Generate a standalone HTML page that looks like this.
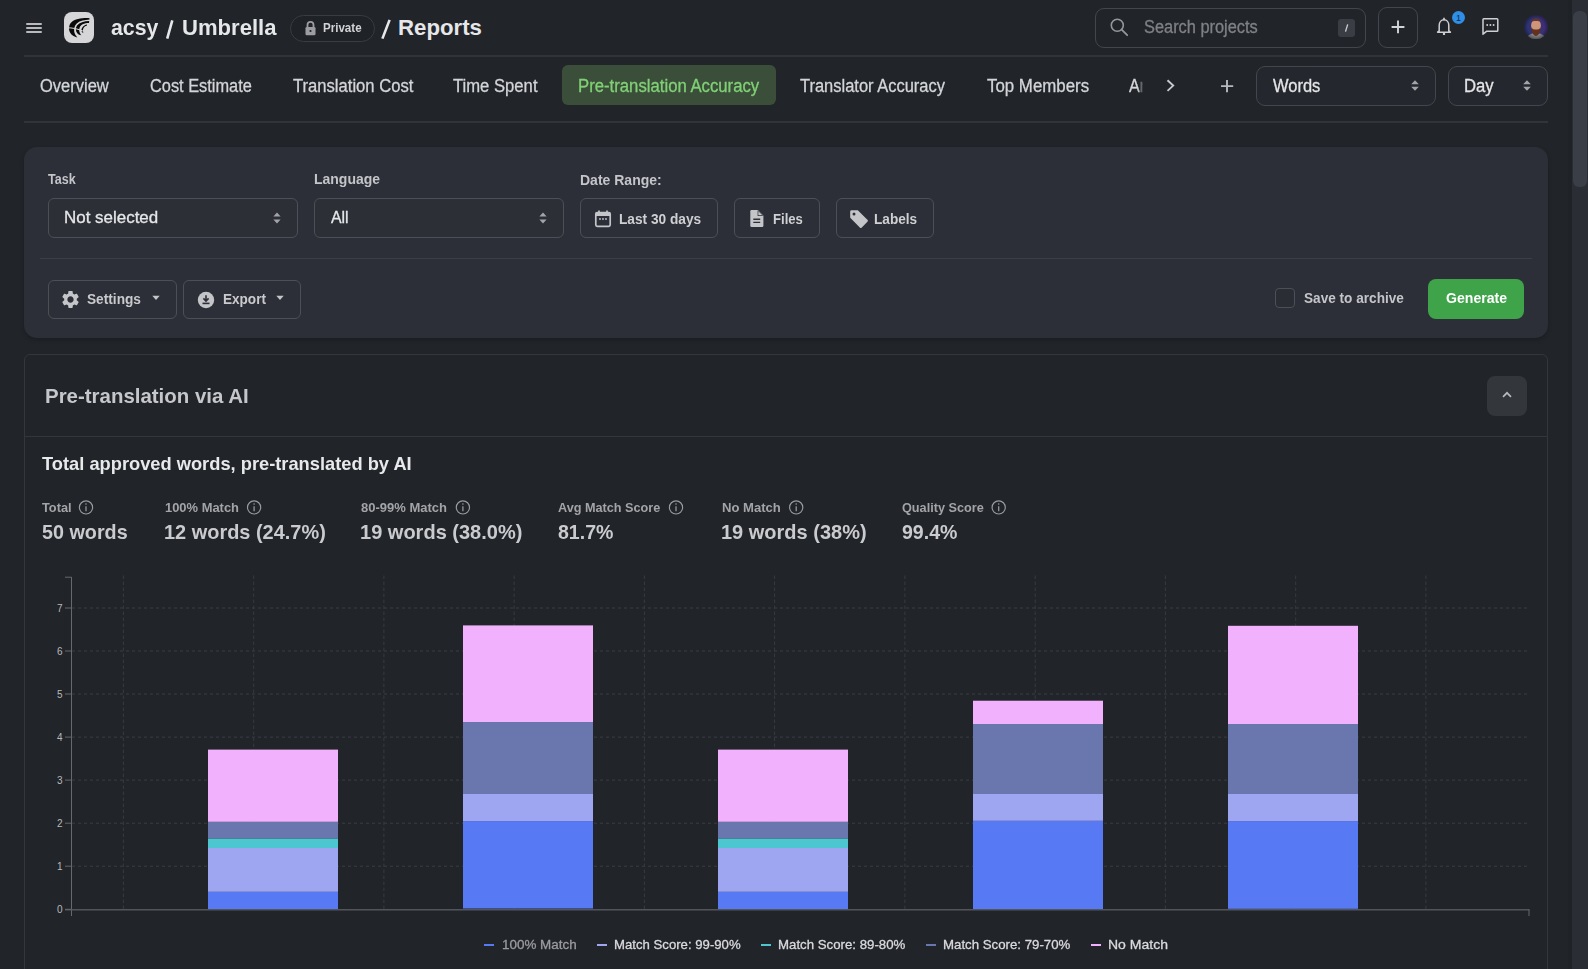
<!DOCTYPE html>
<html><head><meta charset="utf-8">
<style>
html,body{margin:0;padding:0;}
body{width:1588px;height:969px;overflow:hidden;background:#212429;position:relative;font-family:"Liberation Sans", sans-serif;}
.t{position:absolute;white-space:nowrap;line-height:1;}
.a{position:absolute;box-sizing:border-box;}
</style></head><body>
<!-- hamburger -->
<div class="a" style="left:26px;top:22.5px;width:16px;height:2px;background:#b9babe;border-radius:1px"></div>
<div class="a" style="left:26px;top:26.5px;width:16px;height:2px;background:#b9babe;border-radius:1px"></div>
<div class="a" style="left:26px;top:30.5px;width:16px;height:2px;background:#b9babe;border-radius:1px"></div>
<!-- logo -->
<div class="a" style="left:64px;top:12px;width:30px;height:30.5px;background:#d6d6d8;border-radius:8px"></div>
<svg class="a" style="left:64px;top:12px" width="30" height="31" viewBox="0 0 30 31">
  <path d="M25.5,6.2 C19,5.8 11,6.8 7.2,10.5 C4.6,13.2 4.5,17.8 6.2,20.8 C7.6,23.4 10.2,24.9 13.3,25.4 C11.8,23.8 10.6,21.8 10.2,19.5 C9.8,16.5 10.6,13.5 13,11.3 C16,8.8 20.5,8 25.5,7.6 Z" fill="#0a0a0a"/>
  <path d="M25.2,9 C20,9.2 15.5,10.5 13,13.5 C11.3,15.8 11.5,19.5 13.5,21.5 C14.5,22.5 15.8,23 17.2,23.2 C16,21.8 15.2,20 15.2,18 C15.2,15.5 16.5,13.5 18.6,12.3 C20.5,11.3 22.8,11 25,10.9 Z" fill="#0a0a0a"/>
  <path d="M23,12.6 C20.5,13 18.5,14.8 17.6,17 C17.3,18 17.4,19.5 18.5,20.8 L19.5,20.2 C18.8,19 18.8,17.8 19.3,16.6 C20,15 21.2,14 23,13.6 Z" fill="#0a0a0a"/>
  <path d="M3.5,15.8 C8,15.8 13,16.5 20,19.4" fill="none" stroke="#d6d6d8" stroke-width="1"/>
</svg>
<!-- private pill -->
<div class="a" style="left:290px;top:15px;width:85px;height:26.5px;border:1px solid #393c43;border-radius:14px;background:#1f2227"></div>
<svg class="a" style="left:304px;top:20px" width="13" height="16" viewBox="0 0 13 16">
  <path d="M3.5,7 V4.8 A3,3 0 0 1 9.5,4.8 V7" fill="none" stroke="#9c9da2" stroke-width="1.8"/>
  <rect x="1.5" y="7" width="10" height="8.3" rx="1.3" fill="#9c9da2"/>
  <circle cx="6.5" cy="11" r="1.1" fill="#1f2227"/>
</svg>
<!-- search -->
<div class="a" style="left:1095px;top:7.5px;width:271px;height:40px;border:1px solid #43464c;border-radius:9px"></div>
<svg class="a" style="left:1109px;top:17px" width="20" height="20" viewBox="0 0 20 20">
  <circle cx="8.3" cy="8.3" r="6" fill="none" stroke="#95979c" stroke-width="1.6"/>
  <path d="M12.7,12.7 L18.2,18.2" stroke="#95979c" stroke-width="1.8" stroke-linecap="round"/>
</svg>
<div class="a" style="left:1338px;top:18.7px;width:16.5px;height:18px;background:#3a3d43;border-radius:3px"></div>
<svg class="a" style="left:1338px;top:18.7px" width="17" height="18" viewBox="0 0 17 18">
  <path d="M9.6,5.8 L7.6,12.2" stroke="#c9cace" stroke-width="1.3" stroke-linecap="round"/>
</svg>
<!-- plus button -->
<div class="a" style="left:1378px;top:7px;width:40px;height:40.5px;border:1px solid #43464c;border-radius:9px"></div>
<svg class="a" style="left:1390px;top:19px" width="16" height="16" viewBox="0 0 16 16">
  <path d="M8,1.5 V14.3 M1.6,8 H14.4" stroke="#d3d4d7" stroke-width="1.9"/>
</svg>
<!-- bell -->
<svg class="a" style="left:1434px;top:15px" width="20" height="22" viewBox="0 0 20 22">
  <path d="M5.2,15.9 V10.3 C5.2,7.2 7.2,4.8 10,4.8 C12.8,4.8 14.8,7.2 14.8,10.3 V15.9 L16.4,17.2 H3.6 Z" fill="none" stroke="#cfd0d3" stroke-width="1.5" stroke-linejoin="round"/>
  <path d="M10,3.2 V4.8" stroke="#cfd0d3" stroke-width="1.5" stroke-linecap="round"/>
  <circle cx="10" cy="18.9" r="1.2" fill="#cfd0d3"/>
</svg>
<div class="a" style="left:1451.8px;top:11.1px;width:13.4px;height:13.4px;border-radius:50%;background:#2f8ee6"></div>
<div class="t" style="left:1451.8px;top:13.6px;width:13.4px;text-align:center;font-size:9px;color:#0e2a4a;line-height:1">1</div>
<!-- chat -->
<svg class="a" style="left:1479px;top:15px" width="22" height="22" viewBox="0 0 22 22">
  <path d="M4,4.6 Q4,3.8 4.8,3.8 H18 Q18.8,3.8 18.8,4.6 V15.4 Q18.8,16.2 18,16.2 H7.8 L4,19.2 Z" fill="none" stroke="#cfd0d3" stroke-width="1.5" stroke-linejoin="round"/>
  <circle cx="8.2" cy="10" r="0.95" fill="#cfd0d3"/><circle cx="11.4" cy="10" r="0.95" fill="#cfd0d3"/><circle cx="14.6" cy="10" r="0.95" fill="#cfd0d3"/>
</svg>
<!-- avatar -->
<svg class="a" style="left:1524px;top:15px" width="24" height="24" viewBox="0 0 24 24">
  <defs><clipPath id="av"><circle cx="12" cy="12" r="12"/></clipPath>
  <linearGradient id="avg" x1="0" y1="0" x2="1" y2="0"><stop offset="0" stop-color="#2b3470"/><stop offset="1" stop-color="#3f2f78"/></linearGradient>
  <radialGradient id="avv" cx="0.5" cy="0.5" r="0.5"><stop offset="0.7" stop-color="#000" stop-opacity="0"/><stop offset="1" stop-color="#000" stop-opacity="0.35"/></radialGradient></defs>
  <g clip-path="url(#av)">
    <rect width="24" height="24" fill="url(#avg)"/>
    <ellipse cx="12" cy="24.5" rx="10" ry="6.5" fill="#828184"/>
    <ellipse cx="12" cy="10.6" rx="4.9" ry="6.4" fill="#cf957c"/>
    <path d="M7.3,12.2 C7.6,17.5 9.6,20.8 12,21 C14.4,20.8 16.4,17.5 16.7,12.2 C15.4,14.2 14,14.6 12,14.6 C10,14.6 8.6,14.2 7.3,12.2 Z" fill="#62321f"/>
    <path d="M7.4,7 C8.2,4.3 10,3.6 12,3.6 C14,3.6 15.8,4.3 16.6,7 C15,5.8 9,5.8 7.4,7Z" fill="#6b3526"/>
    <rect width="24" height="24" fill="url(#avv)"/>
  </g>
</svg>
<!-- header divider -->
<div class="a" style="left:24px;top:55px;width:1524px;height:2px;background:#31343b"></div>
<!-- active tab -->
<div class="a" style="left:562px;top:65.4px;width:214px;height:39.6px;background:#3b4e3a;border-radius:6px"></div>
<!-- truncated tab -->
<div class="t" style="left:1129.2px;top:76.6px;font-size:18px;color:#d4d5d8;width:16px;overflow:hidden;-webkit-text-stroke:0.3px #d4d5d8;transform:scaleX(0.9);transform-origin:0 0;-webkit-mask-image:linear-gradient(90deg,#000 62%,rgba(0,0,0,0.05) 100%)">Ar</div>
<svg class="a" style="left:1163px;top:77px" width="14" height="17" viewBox="0 0 14 17">
  <path d="M4.5,3.3 L10.2,8.6 L4.5,13.9" fill="none" stroke="#c9cace" stroke-width="1.9"/>
</svg>
<svg class="a" style="left:1219px;top:77.5px" width="16" height="16" viewBox="0 0 16 16">
  <path d="M8,2 V14.2 M2,8.1 H14.2" stroke="#b8b9bd" stroke-width="1.9"/>
</svg>
<!-- words / day selects -->
<div class="a" style="left:1256px;top:65.5px;width:179.5px;height:40px;border:1px solid #43464c;border-radius:9px;background:#24272d"></div>
<div class="a" style="left:1448px;top:65.5px;width:100px;height:40px;border:1px solid #43464c;border-radius:9px;background:#24272d"></div>
<svg class="a" style="left:1410px;top:79px" width="10" height="13" viewBox="0 0 10 13">
  <path d="M5,1.2 L8.8,5.2 H1.2 Z M5,11.8 L8.8,7.8 H1.2 Z" fill="#a3a4a9"/>
</svg>
<svg class="a" style="left:1522px;top:79px" width="10" height="13" viewBox="0 0 10 13">
  <path d="M5,1.2 L8.8,5.2 H1.2 Z M5,11.8 L8.8,7.8 H1.2 Z" fill="#a3a4a9"/>
</svg>
<!-- tabs divider -->
<div class="a" style="left:24px;top:121px;width:1524px;height:2px;background:#31343b"></div>

<!-- filter panel -->
<div class="a" style="left:24px;top:147.3px;width:1524px;height:190.7px;background:#2c2f37;border-radius:13px;box-shadow:0 2px 4px rgba(0,0,0,0.22)"></div>
<div class="a" style="left:48px;top:197.5px;width:250px;height:40px;border:1px solid #4c4f56;border-radius:6px;background:#2c2f36"></div>
<div class="a" style="left:314px;top:197.5px;width:250px;height:40px;border:1px solid #4c4f56;border-radius:6px;background:#2c2f36"></div>
<svg class="a" style="left:272px;top:210.5px" width="10" height="14" viewBox="0 0 10 14">
  <path d="M5,1.4 L8.6,5.6 H1.4 Z M5,12.6 L8.6,8.4 H1.4 Z" fill="#a3a4a9"/>
</svg>
<svg class="a" style="left:538px;top:210.5px" width="10" height="14" viewBox="0 0 10 14">
  <path d="M5,1.4 L8.6,5.6 H1.4 Z M5,12.6 L8.6,8.4 H1.4 Z" fill="#a3a4a9"/>
</svg>
<div class="a" style="left:580px;top:198px;width:138px;height:39.5px;border:1px solid #4c4f56;border-radius:6px"></div>
<div class="a" style="left:734px;top:198px;width:86px;height:39.5px;border:1px solid #4c4f56;border-radius:6px"></div>
<div class="a" style="left:836px;top:198px;width:98px;height:39.5px;border:1px solid #4c4f56;border-radius:6px"></div>
<!-- calendar icon -->
<svg class="a" style="left:594px;top:209px" width="18" height="19" viewBox="0 0 18 19">
  <rect x="1.8" y="3.5" width="14.4" height="13.8" rx="1.5" fill="none" stroke="#c4c5c9" stroke-width="1.7"/>
  <rect x="1.8" y="3.5" width="14.4" height="3.5" fill="#c4c5c9"/>
  <path d="M5,1.5 V4 M13,1.5 V4" stroke="#c4c5c9" stroke-width="1.7"/>
  <circle cx="6" cy="10" r="0.9" fill="#c4c5c9"/><circle cx="9" cy="10" r="0.9" fill="#c4c5c9"/><circle cx="12" cy="10" r="0.9" fill="#c4c5c9"/>
</svg>
<!-- file icon -->
<svg class="a" style="left:749px;top:209px" width="16" height="19" viewBox="0 0 16 19">
  <path d="M1.3,2.3 A1.2,1.2 0 0 1 2.5,1.1 H8.8 L14.4,6.7 V16.7 A1.2,1.2 0 0 1 13.2,17.9 H2.5 A1.2,1.2 0 0 1 1.3,16.7 Z" fill="#c4c5c9"/>
  <path d="M8.6,1.3 V6.9 H14.2 Z" fill="#2c2f37"/>
  <path d="M9.3,2.3 L13.3,6.3 H9.3 Z" fill="#c4c5c9"/>
  <path d="M4.3,10.2 H11.2 M4.3,13.4 H11.2" stroke="#2c2f37" stroke-width="1.4"/>
</svg>
<!-- tag icon -->
<svg class="a" style="left:849px;top:209px" width="20" height="19" viewBox="0 0 20 19">
  <path d="M1.2,2.6 A1.4,1.4 0 0 1 2.6,1.2 H8.8 L18.4,10.8 A1.4,1.4 0 0 1 18.4,12.8 L12.8,18.4 A1.4,1.4 0 0 1 10.8,18.4 L1.2,8.8 Z" fill="#c4c5c9"/>
  <circle cx="5" cy="5" r="1.5" fill="#2c2f37"/>
</svg>
<!-- panel divider -->
<div class="a" style="left:40px;top:257.5px;width:1492px;height:1.2px;background:#3b3e45"></div>
<!-- settings/export -->
<div class="a" style="left:48px;top:280px;width:129px;height:38.5px;border:1px solid #4c4f56;border-radius:6px"></div>
<div class="a" style="left:183px;top:280px;width:118px;height:38.5px;border:1px solid #4c4f56;border-radius:6px"></div>
<svg class="a" style="left:60.3px;top:289px" width="21" height="21" viewBox="0 0 24 24">
  <path fill="#c4c5c9" d="M19.14,12.94c0.04-0.3,0.06-0.61,0.06-0.94c0-0.32-0.02-0.64-0.07-0.94l2.03-1.58c0.18-0.14,0.23-0.41,0.12-0.61 l-1.92-3.32c-0.12-0.22-0.37-0.29-0.59-0.22l-2.39,0.96c-0.5-0.38-1.03-0.7-1.62-0.94L14.4,2.81c-0.04-0.24-0.24-0.41-0.48-0.41 h-3.84c-0.24,0-0.43,0.17-0.47,0.41L9.25,5.35C8.66,5.59,8.12,5.92,7.63,6.29L5.24,5.33c-0.22-0.08-0.47,0-0.59,0.22L2.74,8.87 C2.62,9.08,2.66,9.34,2.86,9.48l2.03,1.58C4.84,11.36,4.8,11.69,4.8,12s0.02,0.64,0.07,0.94l-2.03,1.58 c-0.18,0.14-0.23,0.41-0.12,0.61l1.92,3.32c0.12,0.22,0.37,0.29,0.59,0.22l2.39-0.96c0.5,0.38,1.03,0.7,1.62,0.94l0.36,2.54 c0.05,0.24,0.24,0.41,0.48,0.41h3.84c0.24,0,0.44-0.17,0.47-0.41l0.36-2.54c0.59-0.24,1.13-0.56,1.62-0.94l2.39,0.96 c0.22,0.08,0.47,0,0.59-0.22l1.92-3.32c0.12-0.22,0.07-0.47-0.12-0.61L19.14,12.94z M12,15.6c-1.98,0-3.6-1.62-3.6-3.6 s1.62-3.6,3.6-3.6s3.6,1.62,3.6,3.6S13.98,15.6,12,15.6z"/>
</svg>
<svg class="a" style="left:151px;top:294px" width="10" height="8" viewBox="0 0 10 8">
  <path d="M1.3,1.8 H8.7 L5,6 Z" fill="#c4c5c9"/>
</svg>
<svg class="a" style="left:196.5px;top:290.5px" width="18" height="18" viewBox="0 0 18 18">
  <circle cx="9" cy="9" r="8.2" fill="#c4c5c9"/>
  <path d="M9,4.2 V9.6 M6.4,7.4 L9,10 L11.6,7.4" fill="none" stroke="#2c2f37" stroke-width="1.6"/>
  <path d="M5.5,12.4 H12.5" stroke="#2c2f37" stroke-width="1.6"/>
</svg>
<svg class="a" style="left:275px;top:294px" width="10" height="8" viewBox="0 0 10 8">
  <path d="M1.3,1.8 H8.7 L5,6 Z" fill="#c4c5c9"/>
</svg>
<!-- checkbox -->
<div class="a" style="left:1275px;top:288.3px;width:20px;height:20px;border:1px solid #4c4f56;border-radius:4px;background:#2a2d34"></div>
<!-- generate -->
<div class="a" style="left:1428px;top:278.5px;width:96.2px;height:40.2px;background:#3fa34a;border-radius:8px"></div>

<!-- card -->
<div class="a" style="left:24px;top:354px;width:1523.5px;height:700px;border:1px solid #33363c;border-radius:6px"></div>
<div class="a" style="left:25px;top:435.5px;width:1521.5px;height:1px;background:#33363c"></div>
<div class="a" style="left:1487px;top:375.5px;width:40px;height:40px;background:#33363b;border-radius:8px"></div>
<svg class="a" style="left:1500px;top:388px" width="14" height="14" viewBox="0 0 14 14">
  <path d="M3,8.8 L7,4.8 L11,8.8" fill="none" stroke="#b8b9bd" stroke-width="1.7"/>
</svg>
<!-- info icons -->
<svg class="a" style="left:0;top:0" width="1100" height="560">
<g fill="none" stroke="#9a9ca1" stroke-width="1.15"><circle cx="86.0" cy="507.4" r="6.6"/><circle cx="254.1" cy="507.4" r="6.6"/><circle cx="462.9" cy="507.4" r="6.6"/><circle cx="676.0" cy="507.4" r="6.6"/><circle cx="796.2" cy="507.4" r="6.6"/><circle cx="998.7" cy="507.4" r="6.6"/></g>
<g stroke="#9a9ca1" stroke-width="1.25"><path d="M86.0,506.2 V511.3"/><path d="M254.1,506.2 V511.3"/><path d="M462.9,506.2 V511.3"/><path d="M676.0,506.2 V511.3"/><path d="M796.2,506.2 V511.3"/><path d="M998.7,506.2 V511.3"/></g>
<g fill="#9a9ca1"><circle cx="86.0" cy="504.0" r="0.8"/><circle cx="254.1" cy="504.0" r="0.8"/><circle cx="462.9" cy="504.0" r="0.8"/><circle cx="676.0" cy="504.0" r="0.8"/><circle cx="796.2" cy="504.0" r="0.8"/><circle cx="998.7" cy="504.0" r="0.8"/></g>
</svg>
<svg class="a" style="left:0;top:0" width="1588" height="969" viewBox="0 0 1588 969">
<line x1="72" y1="866.2" x2="1527" y2="866.2" stroke="#3a3d43" stroke-width="1" stroke-dasharray="3 3"/>
<line x1="72" y1="823.2" x2="1527" y2="823.2" stroke="#3a3d43" stroke-width="1" stroke-dasharray="3 3"/>
<line x1="72" y1="780.1" x2="1527" y2="780.1" stroke="#3a3d43" stroke-width="1" stroke-dasharray="3 3"/>
<line x1="72" y1="737.1" x2="1527" y2="737.1" stroke="#3a3d43" stroke-width="1" stroke-dasharray="3 3"/>
<line x1="72" y1="694.0" x2="1527" y2="694.0" stroke="#3a3d43" stroke-width="1" stroke-dasharray="3 3"/>
<line x1="72" y1="651.0" x2="1527" y2="651.0" stroke="#3a3d43" stroke-width="1" stroke-dasharray="3 3"/>
<line x1="72" y1="608.0" x2="1527" y2="608.0" stroke="#3a3d43" stroke-width="1" stroke-dasharray="3 3"/>
<line x1="123.4" y1="575.5" x2="123.4" y2="909" stroke="#383b41" stroke-width="1" stroke-dasharray="3.5 2.5"/>
<line x1="253.7" y1="575.5" x2="253.7" y2="909" stroke="#383b41" stroke-width="1" stroke-dasharray="3.5 2.5"/>
<line x1="383.9" y1="575.5" x2="383.9" y2="909" stroke="#383b41" stroke-width="1" stroke-dasharray="3.5 2.5"/>
<line x1="514.1" y1="575.5" x2="514.1" y2="909" stroke="#383b41" stroke-width="1" stroke-dasharray="3.5 2.5"/>
<line x1="644.4" y1="575.5" x2="644.4" y2="909" stroke="#383b41" stroke-width="1" stroke-dasharray="3.5 2.5"/>
<line x1="774.6" y1="575.5" x2="774.6" y2="909" stroke="#383b41" stroke-width="1" stroke-dasharray="3.5 2.5"/>
<line x1="904.9" y1="575.5" x2="904.9" y2="909" stroke="#383b41" stroke-width="1" stroke-dasharray="3.5 2.5"/>
<line x1="1035.2" y1="575.5" x2="1035.2" y2="909" stroke="#383b41" stroke-width="1" stroke-dasharray="3.5 2.5"/>
<line x1="1165.4" y1="575.5" x2="1165.4" y2="909" stroke="#383b41" stroke-width="1" stroke-dasharray="3.5 2.5"/>
<line x1="1295.7" y1="575.5" x2="1295.7" y2="909" stroke="#383b41" stroke-width="1" stroke-dasharray="3.5 2.5"/>
<line x1="1425.9" y1="575.5" x2="1425.9" y2="909" stroke="#383b41" stroke-width="1" stroke-dasharray="3.5 2.5"/>
<rect x="208" y="891.8" width="130" height="17.2" fill="#5779f3"/>
<rect x="208" y="848.0" width="130" height="43.8" fill="#9ea6f2"/>
<rect x="208" y="838.4" width="130" height="9.6" fill="#4cc7d0"/>
<rect x="208" y="821.8" width="130" height="16.6" fill="#6a76ae"/>
<rect x="208" y="749.6" width="130" height="72.2" fill="#f2b1fc"/>
<rect x="463" y="821.1" width="130" height="87.4" fill="#5779f3"/>
<rect x="463" y="794.0" width="130" height="27.1" fill="#9ea6f2"/>
<rect x="463" y="722.0" width="130" height="72.0" fill="#6a76ae"/>
<rect x="463" y="625.4" width="130" height="96.6" fill="#f2b1fc"/>
<rect x="718" y="891.8" width="130" height="17.2" fill="#5779f3"/>
<rect x="718" y="848.0" width="130" height="43.8" fill="#9ea6f2"/>
<rect x="718" y="838.4" width="130" height="9.6" fill="#4cc7d0"/>
<rect x="718" y="821.8" width="130" height="16.6" fill="#6a76ae"/>
<rect x="718" y="749.6" width="130" height="72.2" fill="#f2b1fc"/>
<rect x="973" y="820.8" width="130" height="88.2" fill="#5779f3"/>
<rect x="973" y="794.0" width="130" height="26.8" fill="#9ea6f2"/>
<rect x="973" y="724.0" width="130" height="70.0" fill="#6a76ae"/>
<rect x="973" y="700.7" width="130" height="23.3" fill="#f2b1fc"/>
<rect x="1228" y="821.1" width="130" height="87.7" fill="#5779f3"/>
<rect x="1228" y="794.0" width="130" height="27.1" fill="#9ea6f2"/>
<rect x="1228" y="724.0" width="130" height="70.0" fill="#6a76ae"/>
<rect x="1228" y="625.8" width="130" height="98.2" fill="#f2b1fc"/>
<line x1="71.5" y1="577" x2="71.5" y2="916" stroke="#66696f" stroke-width="1"/>
<line x1="65" y1="577.2" x2="71.5" y2="577.2" stroke="#66696f" stroke-width="1"/>
<line x1="65" y1="909.8" x2="1529.5" y2="909.8" stroke="#52555b" stroke-width="1.6"/>
<line x1="1529" y1="909.5" x2="1529" y2="916" stroke="#66696f" stroke-width="1"/>
<line x1="65" y1="909.3" x2="71.5" y2="909.3" stroke="#66696f" stroke-width="1"/>
<text x="62.5" y="913.3" text-anchor="end" style="font-family:'Liberation Sans',sans-serif;font-size:10px" fill="#b8b9bd">0</text>
<line x1="65" y1="866.2" x2="71.5" y2="866.2" stroke="#66696f" stroke-width="1"/>
<text x="62.5" y="870.2" text-anchor="end" style="font-family:'Liberation Sans',sans-serif;font-size:10px" fill="#b8b9bd">1</text>
<line x1="65" y1="823.2" x2="71.5" y2="823.2" stroke="#66696f" stroke-width="1"/>
<text x="62.5" y="827.2" text-anchor="end" style="font-family:'Liberation Sans',sans-serif;font-size:10px" fill="#b8b9bd">2</text>
<line x1="65" y1="780.1" x2="71.5" y2="780.1" stroke="#66696f" stroke-width="1"/>
<text x="62.5" y="784.1" text-anchor="end" style="font-family:'Liberation Sans',sans-serif;font-size:10px" fill="#b8b9bd">3</text>
<line x1="65" y1="737.1" x2="71.5" y2="737.1" stroke="#66696f" stroke-width="1"/>
<text x="62.5" y="741.1" text-anchor="end" style="font-family:'Liberation Sans',sans-serif;font-size:10px" fill="#b8b9bd">4</text>
<line x1="65" y1="694.0" x2="71.5" y2="694.0" stroke="#66696f" stroke-width="1"/>
<text x="62.5" y="698.0" text-anchor="end" style="font-family:'Liberation Sans',sans-serif;font-size:10px" fill="#b8b9bd">5</text>
<line x1="65" y1="651.0" x2="71.5" y2="651.0" stroke="#66696f" stroke-width="1"/>
<text x="62.5" y="655.0" text-anchor="end" style="font-family:'Liberation Sans',sans-serif;font-size:10px" fill="#b8b9bd">6</text>
<line x1="65" y1="608.0" x2="71.5" y2="608.0" stroke="#66696f" stroke-width="1"/>
<text x="62.5" y="612.0" text-anchor="end" style="font-family:'Liberation Sans',sans-serif;font-size:10px" fill="#b8b9bd">7</text>
<rect x="484" y="944" width="10" height="2" fill="#5779f3"/>
<rect x="597" y="944" width="10" height="2" fill="#9ea6f2"/>
<rect x="761" y="944" width="10" height="2" fill="#4cc7d0"/>
<rect x="926" y="944" width="10" height="2" fill="#6a76ae"/>
<rect x="1091" y="944" width="10" height="2" fill="#f2b1fc"/>
</svg>
<!-- scrollbar -->
<div class="a" style="left:1568px;top:0;width:4px;height:969px;background:#1f2227"></div>
<div class="a" style="left:1572px;top:0;width:16px;height:969px;background:#2a2d34"></div>
<div class="a" style="left:1573px;top:10.5px;width:14px;height:176px;background:#3a3e46;border-radius:6px"></div>
<svg class="a" style="left:160px;top:15px" width="240" height="30" viewBox="160 15 240 30">
  <path d="M167.2,38.6 L172.3,20.3 M382.4,38.6 L389.6,19.9" stroke="#e6e7e9" stroke-width="2.6" stroke-linecap="butt"/>
</svg>

<div id="h1a" class="t" style="left:110.70px;top:17.41px;font-size:22.20px;font-weight:700;color:#e6e7e9;transform:scaleX(0.9576);transform-origin:0 0;">acsy</div>
<div id="h1b" class="t" style="left:181.91px;top:17.41px;font-size:22.20px;font-weight:700;color:#e6e7e9;transform:scaleX(0.9946);transform-origin:0 0;">Umbrella</div>
<div id="priv" class="t" style="left:322.70px;top:20.97px;font-size:13.50px;font-weight:700;color:#d2d3d6;transform:scaleX(0.8568);transform-origin:0 0;">Private</div>
<div id="rep" class="t" style="left:398.10px;top:17.41px;font-size:22.20px;font-weight:700;color:#e6e7e9;">Reports</div>
<div id="srch" class="t" style="left:1143.50px;top:18.99px;font-size:17.50px;font-weight:400;color:#7f8186;transform:scaleX(0.9357);transform-origin:0 0;-webkit-text-stroke:0.30px #7f8186;">Search projects</div>
<div id="t1" class="t" style="left:40.30px;top:76.56px;font-size:18.00px;font-weight:400;color:#d4d5d8;transform:scaleX(0.9169);transform-origin:0 0;-webkit-text-stroke:0.30px #d4d5d8;">Overview</div>
<div id="t2" class="t" style="left:150.20px;top:76.56px;font-size:18.00px;font-weight:400;color:#d4d5d8;transform:scaleX(0.9087);transform-origin:0 0;-webkit-text-stroke:0.30px #d4d5d8;">Cost Estimate</div>
<div id="t3" class="t" style="left:292.80px;top:76.56px;font-size:18.00px;font-weight:400;color:#d4d5d8;transform:scaleX(0.9234);transform-origin:0 0;-webkit-text-stroke:0.30px #d4d5d8;">Translation Cost</div>
<div id="t4" class="t" style="left:453.40px;top:76.56px;font-size:18.00px;font-weight:400;color:#d4d5d8;transform:scaleX(0.9248);transform-origin:0 0;-webkit-text-stroke:0.30px #d4d5d8;">Time Spent</div>
<div id="t5" class="t" style="left:578.07px;top:76.56px;font-size:18.00px;font-weight:400;color:#80d176;transform:scaleX(0.9289);transform-origin:0 0;-webkit-text-stroke:0.30px #80d176;">Pre-translation Accuracy</div>
<div id="t6" class="t" style="left:800.40px;top:76.56px;font-size:18.00px;font-weight:400;color:#d4d5d8;transform:scaleX(0.9154);transform-origin:0 0;-webkit-text-stroke:0.30px #d4d5d8;">Translator Accuracy</div>
<div id="t7" class="t" style="left:986.80px;top:76.56px;font-size:18.00px;font-weight:400;color:#d4d5d8;transform:scaleX(0.9364);transform-origin:0 0;-webkit-text-stroke:0.30px #d4d5d8;">Top Members</div>
<div id="words" class="t" style="left:1273.00px;top:76.96px;font-size:18.00px;font-weight:400;color:#e4e5e7;transform:scaleX(0.9153);transform-origin:0 0;-webkit-text-stroke:0.30px #e4e5e7;">Words</div>
<div id="day" class="t" style="left:1464.37px;top:76.96px;font-size:18.00px;font-weight:400;color:#e4e5e7;transform:scaleX(0.9255);transform-origin:0 0;-webkit-text-stroke:0.30px #e4e5e7;">Day</div>
<div id="lTask" class="t" style="left:48.30px;top:172.13px;font-size:14.50px;font-weight:700;color:#c4c5c9;transform:scaleX(0.8630);transform-origin:0 0;">Task</div>
<div id="lLang" class="t" style="left:314.40px;top:172.33px;font-size:14.50px;font-weight:700;color:#c4c5c9;transform:scaleX(0.9647);transform-origin:0 0;">Language</div>
<div id="lDate" class="t" style="left:580.00px;top:172.83px;font-size:14.50px;font-weight:700;color:#c4c5c9;transform:scaleX(0.9657);transform-origin:0 0;">Date Range:</div>
<div id="sNot" class="t" style="left:64.27px;top:209.13px;font-size:16.50px;font-weight:400;color:#e6e7e9;transform:scaleX(1.0272);transform-origin:0 0;-webkit-text-stroke:0.30px #e6e7e9;">Not selected</div>
<div id="sAll" class="t" style="left:331.20px;top:209.13px;font-size:16.50px;font-weight:400;color:#e6e7e9;transform:scaleX(0.9620);transform-origin:0 0;-webkit-text-stroke:0.30px #e6e7e9;">All</div>
<div id="bLast" class="t" style="left:618.59px;top:211.40px;font-size:15.00px;font-weight:700;color:#cfd0d3;transform:scaleX(0.9120);transform-origin:0 0;">Last 30 days</div>
<div id="bFiles" class="t" style="left:772.53px;top:211.40px;font-size:15.00px;font-weight:700;color:#cfd0d3;transform:scaleX(0.8739);transform-origin:0 0;">Files</div>
<div id="bLabels" class="t" style="left:874.19px;top:211.40px;font-size:15.00px;font-weight:700;color:#cfd0d3;transform:scaleX(0.9074);transform-origin:0 0;">Labels</div>
<div id="bSet" class="t" style="left:87.00px;top:292.33px;font-size:14.50px;font-weight:700;color:#c9cacd;transform:scaleX(0.9434);transform-origin:0 0;">Settings</div>
<div id="bExp" class="t" style="left:222.50px;top:292.33px;font-size:14.50px;font-weight:700;color:#c9cacd;transform:scaleX(0.9351);transform-origin:0 0;">Export</div>
<div id="save" class="t" style="left:1303.80px;top:290.83px;font-size:14.50px;font-weight:700;color:#c4c5c9;transform:scaleX(0.9386);transform-origin:0 0;">Save to archive</div>
<div id="gen" class="t" style="left:1445.50px;top:291.33px;font-size:14.50px;font-weight:700;color:#ffffff;transform:scaleX(0.9713);transform-origin:0 0;">Generate</div>
<div id="ct" class="t" style="left:44.53px;top:385.42px;font-size:21.00px;font-weight:700;color:#c6c7cb;transform:scaleX(0.9735);transform-origin:0 0;">Pre-translation via AI</div>
<div id="sub" class="t" style="left:41.70px;top:454.02px;font-size:19.00px;font-weight:700;color:#e8e9eb;transform:scaleX(0.9620);transform-origin:0 0;">Total approved words, pre-translated by AI</div>
<div id="sl0" class="t" style="left:41.70px;top:501.13px;font-size:13.20px;font-weight:700;color:#a3a4a8;transform:scaleX(0.9679);transform-origin:0 0;">Total</div>
<div id="sv0" class="t" style="left:41.70px;top:521.32px;font-size:21.00px;font-weight:700;color:#cacbce;transform:scaleX(0.9407);transform-origin:0 0;">50 words</div>
<div id="sl1" class="t" style="left:164.50px;top:501.13px;font-size:13.20px;font-weight:700;color:#a3a4a8;transform:scaleX(0.9796);transform-origin:0 0;">100% Match</div>
<div id="sv1" class="t" style="left:163.55px;top:521.32px;font-size:21.00px;font-weight:700;color:#cacbce;transform:scaleX(0.9495);transform-origin:0 0;">12 words (24.7%)</div>
<div id="sl2" class="t" style="left:361.00px;top:501.13px;font-size:13.20px;font-weight:700;color:#a3a4a8;transform:scaleX(0.9866);transform-origin:0 0;">80-99% Match</div>
<div id="sv2" class="t" style="left:360.05px;top:521.32px;font-size:21.00px;font-weight:700;color:#cacbce;transform:scaleX(0.9531);transform-origin:0 0;">19 words (38.0%)</div>
<div id="sl3" class="t" style="left:558.30px;top:501.13px;font-size:13.20px;font-weight:700;color:#a3a4a8;transform:scaleX(0.9607);transform-origin:0 0;">Avg Match Score</div>
<div id="sv3" class="t" style="left:558.30px;top:521.32px;font-size:21.00px;font-weight:700;color:#cacbce;transform:scaleX(0.9303);transform-origin:0 0;">81.7%</div>
<div id="sl4" class="t" style="left:721.60px;top:501.13px;font-size:13.20px;font-weight:700;color:#a3a4a8;transform:scaleX(0.9918);transform-origin:0 0;">No Match</div>
<div id="sv4" class="t" style="left:720.65px;top:521.32px;font-size:21.00px;font-weight:700;color:#cacbce;transform:scaleX(0.9523);transform-origin:0 0;">19 words (38%)</div>
<div id="sl5" class="t" style="left:901.70px;top:501.13px;font-size:13.20px;font-weight:700;color:#a3a4a8;transform:scaleX(0.9624);transform-origin:0 0;">Quality Score</div>
<div id="sv5" class="t" style="left:901.70px;top:521.32px;font-size:21.00px;font-weight:700;color:#cacbce;transform:scaleX(0.9303);transform-origin:0 0;">99.4%</div>
<div id="lg1" class="t" style="left:501.89px;top:937.54px;font-size:13.30px;font-weight:400;color:#9b9ca1;transform:scaleX(1.0094);transform-origin:0 0;-webkit-text-stroke:0.30px #9b9ca1;">100% Match</div>
<div id="lg2" class="t" style="left:614.11px;top:937.54px;font-size:13.30px;font-weight:400;color:#dadbde;transform:scaleX(0.9903);transform-origin:0 0;-webkit-text-stroke:0.30px #dadbde;">Match Score: 99-90%</div>
<div id="lg3" class="t" style="left:778.00px;top:937.54px;font-size:13.30px;font-weight:400;color:#dadbde;transform:scaleX(0.9958);transform-origin:0 0;-webkit-text-stroke:0.30px #dadbde;">Match Score: 89-80%</div>
<div id="lg4" class="t" style="left:943.00px;top:937.54px;font-size:13.30px;font-weight:400;color:#dadbde;transform:scaleX(0.9958);transform-origin:0 0;-webkit-text-stroke:0.30px #dadbde;">Match Score: 79-70%</div>
<div id="lg5" class="t" style="left:1107.95px;top:937.54px;font-size:13.30px;font-weight:400;color:#dadbde;transform:scaleX(1.0539);transform-origin:0 0;-webkit-text-stroke:0.30px #dadbde;">No Match</div>
</body></html>
